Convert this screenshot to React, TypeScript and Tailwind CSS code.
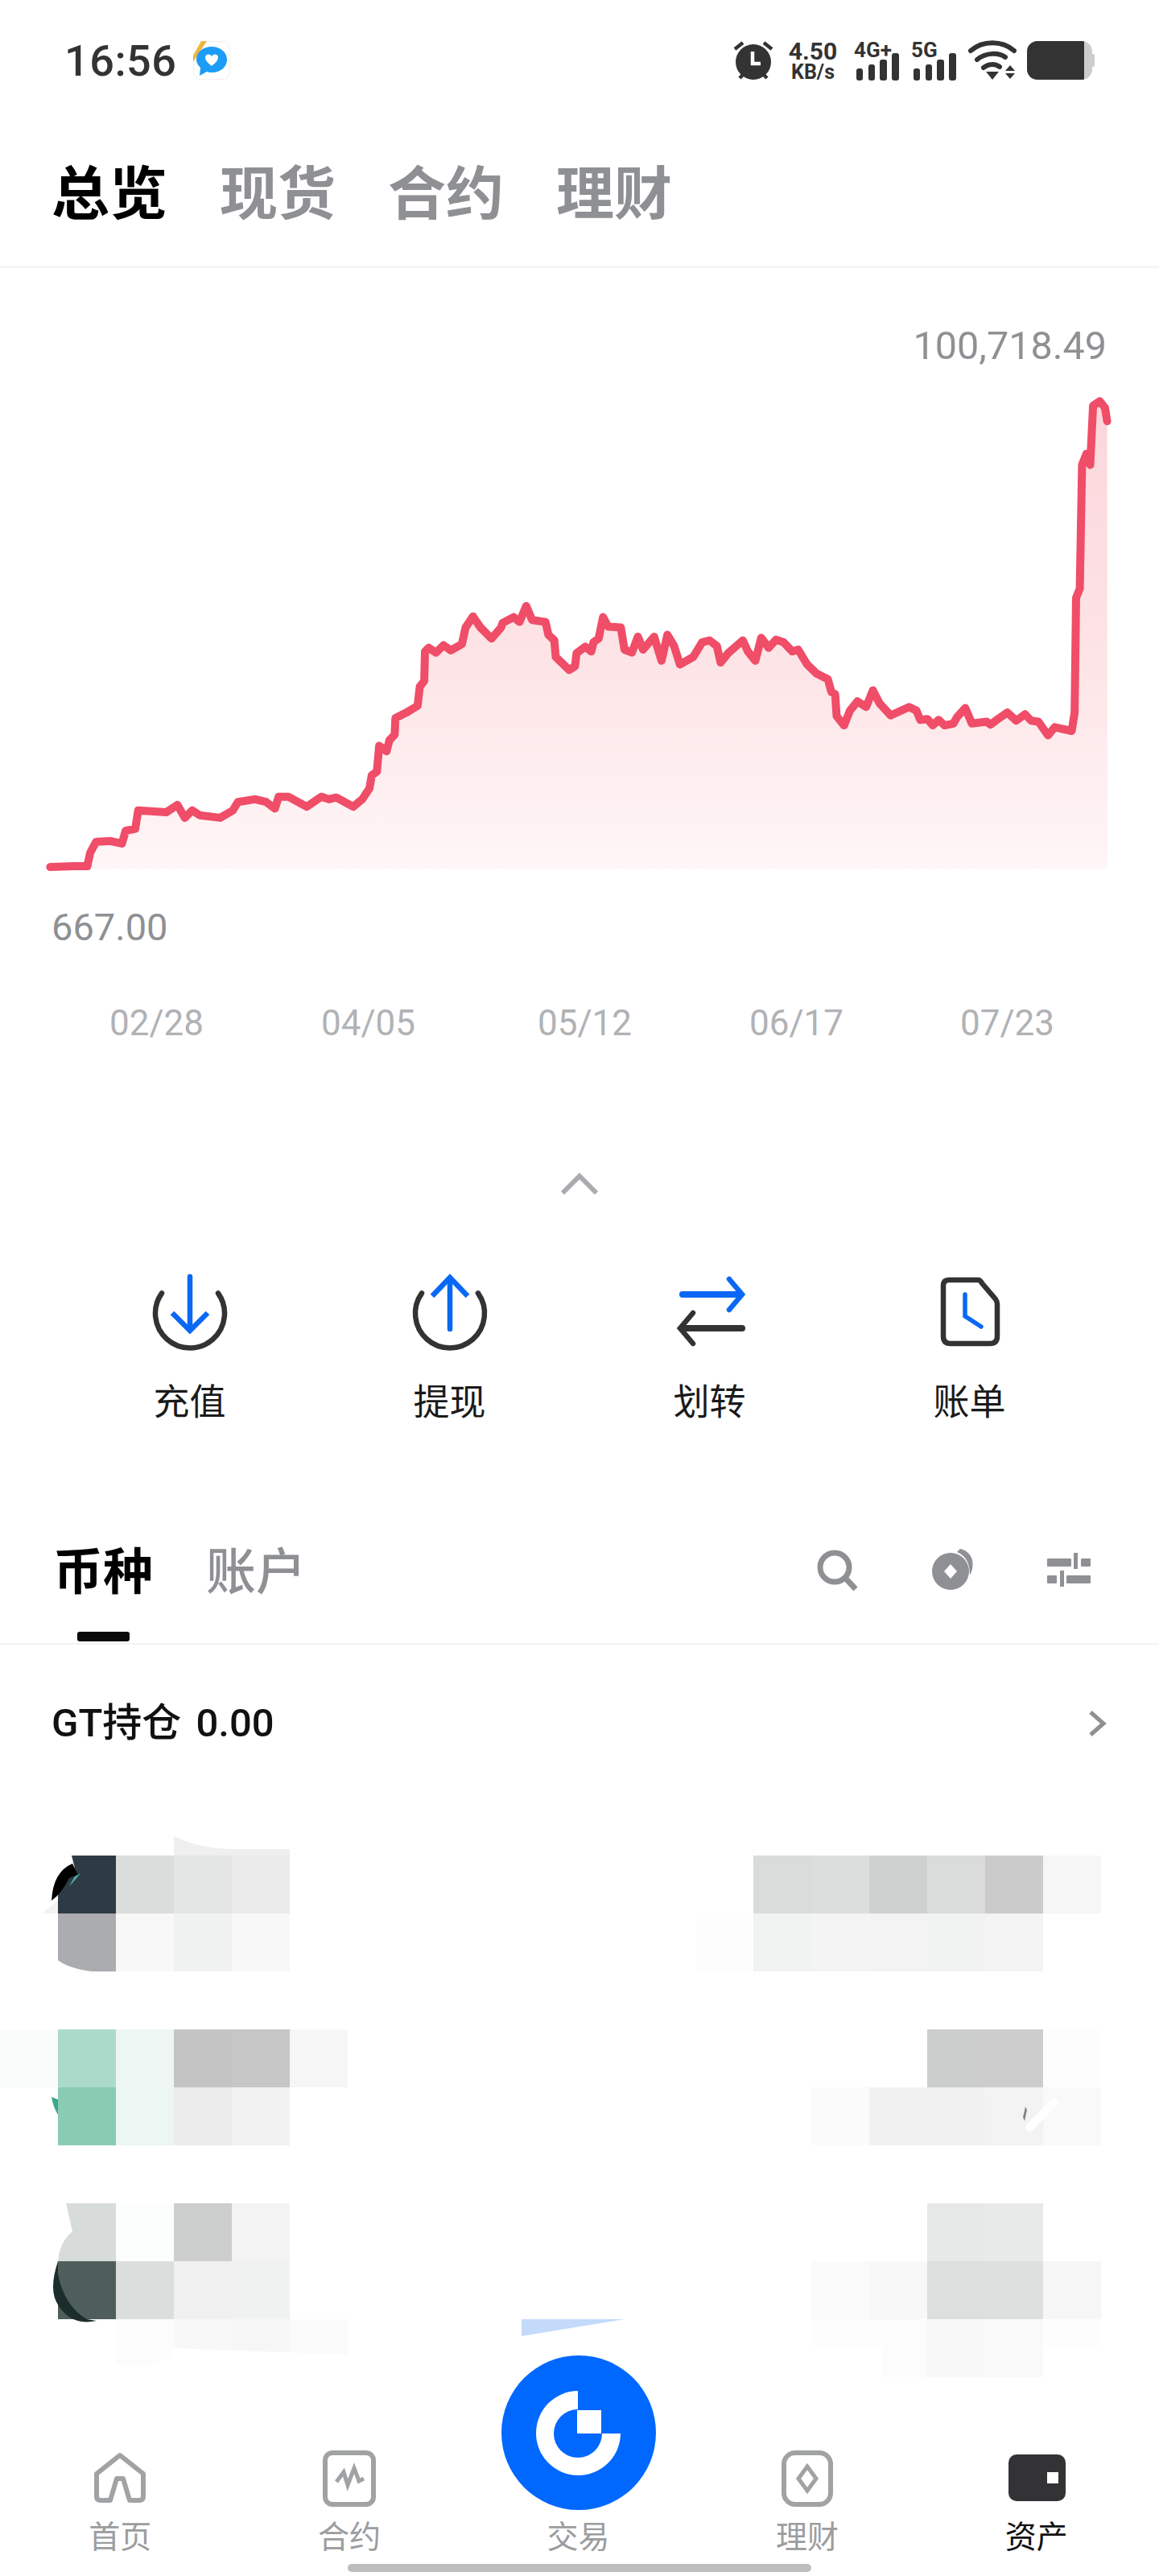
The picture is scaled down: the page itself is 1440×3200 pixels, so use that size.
const raw: [number, number][] = [[68,1518],[100,1516],[118,1516],[122,1480],[130,1450],[150,1448],[165,1455],[170,1420],[183,1415],[187,1365],[225,1370],[240,1350],[250,1385],[260,1365],[270,1378],[298,1385],[315,1365],[322,1342],[345,1335],[360,1342],[372,1360],[377,1328],[390,1328],[415,1355],[435,1328],[445,1335],[455,1330],[478,1355],[490,1335],[500,1305],[503,1270],[510,1260],[513,1190],[523,1205],[527,1175],[534,1160],[535,1115],[550,1100],[565,1082],[568,1030],[574,1015],[575,935],[580,925],[590,938],[600,918],[610,932],[625,915],[630,870],[640,840],[650,870],[665,900],[678,870],[680,858],[695,842],[703,855],[712,812],[720,850],[738,855],[742,890],[750,905],[752,950],[770,985],[778,975],[780,940],[792,922],[800,935],[803,910],[810,900],[816,842],[823,868],[840,870],[845,930],[855,938],[863,895],[870,930],[885,895],[895,960],[903,890],[912,920],[920,970],[938,950],[950,910],[960,905],[970,920],[975,965],[985,940],[1005,905],[1012,935],[1022,960],[1030,898],[1040,925],[1050,903],[1060,910],[1072,935],[1080,930],[1092,970],[1105,995],[1120,1010],[1125,1045],[1130,1050],[1132,1110],[1142,1135],[1150,1095],[1160,1070],[1172,1085],[1181,1040],[1190,1075],[1205,1108],[1230,1085],[1240,1095],[1245,1120],[1255,1118],[1262,1135],[1270,1120],[1278,1135],[1290,1130],[1295,1112],[1306,1088],[1315,1130],[1335,1125],[1340,1133],[1350,1118],[1363,1100],[1375,1122],[1387,1105],[1395,1122],[1405,1125],[1418,1162],[1427,1140],[1450,1150],[1454,1100],[1456,790],[1461,765],[1464,430],[1470,400],[1475,430],[1479,270],[1488,258],[1495,275],[1498,312]];

const pts = raw.map(([x, y]) => [x / 1.089, 380 + y / 2.178 - 460] as [number, number]);
const line = pts.map(([x, y]) => `${x.toFixed(1)},${y.toFixed(1)}`).join(" ");
const area = `M${line.split(" ").join(" L")} L1376,619 L64,619 Z`;

const mosaic: string[][] = [
  ["", "bg-[#2f3b44]", "bg-[#dbdcdc]", "bg-[#e4e5e5]", "bg-[#ebebeb]", "", "", "", "", "", "", "", "", "bg-[#dadbdb]", "bg-[#dcdddd]", "bg-[#cfd0d0]", "bg-[#dadbdb]", "bg-[#cbcbcb]", "bg-[#f6f6f6]", ""],
  ["", "bg-[#abacaf]", "bg-[#f8f8f8]", "bg-[#f0f1f1]", "bg-[#f8f8f8]", "", "", "", "", "", "", "", "bg-[#fdfdfd]", "bg-[#f1f2f2]", "bg-[#f4f4f4]", "bg-[#f3f3f3]", "bg-[#f1f2f2]", "bg-[#f4f4f4]", "", ""],
  [],
  ["bg-[#f9fcfb]", "bg-[#acdaca]", "bg-[#eef6f3]", "bg-[#c4c4c4]", "bg-[#c6c6c6]", "bg-[#f6f6f6]", "", "", "", "", "", "", "", "", "", "", "bg-[#cccdcd]", "bg-[#cdcdcd]", "bg-[#fdfdfd]", ""],
  ["", "bg-[#88ccb3]", "bg-[#ecf6f3]", "bg-[#ececec]", "bg-[#f2f2f2]", "", "", "", "", "", "", "", "", "", "bg-[#fbfbfb]", "bg-[#f1f1f1]", "bg-[#f0f1f0]", "bg-[#f3f3f3]", "bg-[#f8f9f8]", ""],
  [],
  ["", "bg-[#d7dbda]", "bg-[#fcfefd]", "bg-[#cdcfce]", "bg-[#f3f3f3]", "", "", "", "", "", "", "", "", "", "", "", "bg-[#e7e8e8]", "bg-[#e8e9e9]", "", ""],
  ["", "bg-[#4f5e5a]", "bg-[#dcdede]", "bg-[#f0f0f0]", "bg-[#f0f1f1]", "", "", "", "", "", "", "", "", "", "bg-[#fbfbfb]", "bg-[#f8f8f8]", "bg-[#dddede]", "bg-[#dedfdf]", "bg-[#f6f6f6]", ""],
  ["", "", "bg-[#fcfcfc]", "bg-[#f8f8f8]", "bg-[#f6f6f6]", "bg-[#fbfbfb]", "", "", "", "", "", "", "", "", "bg-[#fdfdfd]", "bg-[#fcfcfc]", "bg-[#f8f8f8]", "bg-[#f9f9f9]", "bg-[#fdfdfd]", ""],
];

function Signal({ label, width }: { label: string; width: string }) {
  return (
    <div className={`relative h-[50px] ${width}`}>
      <span className="absolute left-0 top-[-3px] text-[26px] leading-[30px] font-bold text-[#333]">{label}</span>
      <svg className="absolute left-[3px] top-[16px]" width="54" height="34" viewBox="0 0 54 34" fill="#333">
        <rect x="0" y="19" width="8" height="15" rx="3" />
        <rect x="15" y="14" width="8" height="20" rx="3" />
        <rect x="29" y="8" width="9" height="26" rx="3" />
        <rect x="44" y="0" width="9" height="34" rx="3" />
      </svg>
    </div>
  );
}

function StatusBar() {
  return (
    <div className="flex h-[150px] items-center justify-between pl-[80px] pr-[80px]">
      <div className="flex items-center">
        <span className="relative top-[1px] text-[54px] leading-[60px] font-medium tracking-[0.5px] text-[#333]">16:56</span>
        <svg className="ml-[20px]" width="46" height="48" viewBox="0 0 46 48">
          <rect x="0.5" y="0.5" width="45" height="47" rx="9" fill="#fff" stroke="#f0f0f0" />
          <path d="M0 18 L10 0 H17 L0 26 Z" fill="#eeb53f" />
          <path d="M23 7 C34 7 42 14 42 23 C42 32 34 39 24 39 C21 39 19 39 17 38 L8 43 L9 33 C6 30 4 27 4 23 C4 14 12 7 23 7 Z" fill="#1c9cf6" />
          <path d="M23 31 C18 27 15 24 15 20 C15 16 21 15 23 19 C25 15 31 16 31 20 C31 24 28 27 23 31 Z" fill="#fff" />
        </svg>
      </div>
      <div className="flex items-center">
        <svg width="50" height="50" viewBox="0 0 50 50">
          <circle cx="25" cy="27" r="22" fill="#333" />
          <path d="M24 14 V29 H34" fill="none" stroke="#fff" strokeWidth="4.5" />
          <path d="M2 11 L12 3 M48 11 L38 3 M8 47 L13 42 M42 47 L37 42" fill="none" stroke="#333" strokeWidth="4.5" />
        </svg>
        <div className="ml-[18px] flex w-[62px] flex-col items-center pt-[2px] text-[#333] font-bold">
          <span className="text-[30px] leading-[28px]">4.50</span>
          <span className="text-[25px] leading-[24px]">KB/s</span>
        </div>
        <div className="ml-[20px]"><Signal label="4G+" width="w-[71px]" /></div>
        <Signal label="5G" width="w-[71px]" />
        <svg width="60" height="50" viewBox="0 0 60 50" fill="none">
          <path d="M3 13 C18 0 42 0 57 13" stroke="#333" strokeWidth="6" strokeLinecap="round" />
          <path d="M11 24 C22 15 38 15 46 21" stroke="#333" strokeWidth="6" strokeLinecap="round" />
          <path d="M19 34 C25 29 33 29 39 33" stroke="#333" strokeWidth="6" strokeLinecap="round" />
          <path d="M22 39 H38 L30 49 Z" fill="#333" />
          <path d="M46 38 H58 L52 31 Z M46 41 H58 L52 48 Z" fill="#333" />
        </svg>
        <div className="ml-[13px] flex h-[48px] items-center">
          <div className="flex h-full w-[81px] overflow-hidden rounded-[13px] bg-[#cdcdcd]">
            <div className="h-full w-[71px] bg-[#333]" />
          </div>
          <div className="h-[16px] w-[3px] rounded-r-[2px] bg-[#cdcdcd]" />
        </div>
      </div>
    </div>
  );
}

function TopTabs() {
  const tabs = ["总览", "现货", "合约", "理财"];
  return (
    <div className="flex h-[183px] items-start gap-[65px] border-b-[3px] border-[#f5f5f5] pl-[64px] pt-[50px]">
      {tabs.map((t, i) => (
        <span key={t} className={`text-[72px] leading-[84px] font-bold ${i === 0 ? "text-black" : "text-[#8e9093]"}`}>{t}</span>
      ))}
    </div>
  );
}

function Chart() {
  return (
    <div>
      <div className="flex justify-end pr-[65px] pt-[67px]">
        <span className="text-[48.5px] leading-[60px] text-[#8e9093]">100,718.49</span>
      </div>
      <svg width="1440" height="630" viewBox="0 0 1440 630" className="block">
        <defs>
          <linearGradient id="chartFill" x1="0" y1="0" x2="0" y2="1">
            <stop offset="0" stopColor="#fbd6db" />
            <stop offset="0.55" stopColor="#fde4e6" />
            <stop offset="1" stopColor="#fff6f7" />
          </linearGradient>
        </defs>
        <path d={area} fill="url(#chartFill)" />
        <polyline points={line} fill="none" stroke="#ef4d68" strokeWidth="10" strokeLinejoin="round" strokeLinecap="round" />
      </svg>
      <div className="mt-[32px] pl-[64px] text-[47px] leading-[60px] text-[#8e9093]">667.00</div>
      <div className="mt-[64px] grid grid-cols-[263px_269px_263px_262px_116px] pl-[136px] text-[44px] leading-[50px] text-[#b0b2b5]">
        {["02/28", "04/05", "05/12", "06/17", "07/23"].map((d) => (
          <span key={d}>{d}</span>
        ))}
      </div>
      <div className="mt-[161px] flex justify-center">
        <svg width="50" height="28" viewBox="0 0 50 28" fill="none">
          <path d="M4 25 L25 4 L46 25" stroke="#a9abae" strokeWidth="6" />
        </svg>
      </div>
    </div>
  );
}

function Actions() {
  const blue = "#0a68f5";
  const dark = "#333";
  const ring = "M15 26.5 A43 43 0 1 0 85 26.5";
  const items = [
    {
      label: "充值",
      icon: (
        <>
          <path d={ring} stroke={dark} strokeWidth="6.5" strokeLinecap="round" />
          <path d="M50 6 V72" stroke={blue} strokeWidth="6.5" strokeLinecap="round" />
          <path d="M28 51 L50 73 L72 51" stroke={blue} strokeWidth="6.5" />
        </>
      ),
    },
    {
      label: "提现",
      icon: (
        <>
          <path d={ring} stroke={dark} strokeWidth="6.5" strokeLinecap="round" />
          <path d="M50 8 V71" stroke={blue} strokeWidth="6.5" strokeLinecap="round" />
          <path d="M28 30 L50 7 L72 30" stroke={blue} strokeWidth="6.5" />
        </>
      ),
    },
    {
      label: "划转",
      icon: (
        <>
          <path d="M16 28 H88" stroke={blue} strokeWidth="8" strokeLinecap="round" />
          <path d="M74 9 L90 28 L74 47" stroke={blue} strokeWidth="6.5" strokeLinecap="round" />
          <path d="M90 70 H15" stroke={dark} strokeWidth="8" strokeLinecap="round" />
          <path d="M29 51 L13 70 L29 89" stroke={dark} strokeWidth="6.5" strokeLinecap="round" />
        </>
      ),
    },
    {
      label: "账单",
      icon: (
        <>
          <path d="M24 10 H60 Q63 10 65 14 L82 34 Q84 37 84 40 V80 Q84 89 75 89 H26 Q17 89 17 80 V17 Q17 10 24 10 Z" stroke={dark} strokeWidth="6.5" />
          <path d="M44 28 V55 L64 68" stroke={blue} strokeWidth="5.5" strokeLinecap="round" />
        </>
      ),
    },
  ];
  return (
    <div className="mt-[95px] grid grid-cols-4 pl-[74px] pr-[74px]">
      {items.map((it) => (
        <div key={it.label} className="flex flex-col items-center">
          <svg width="100" height="100" viewBox="0 0 100 100" fill="none">{it.icon}</svg>
          <span className="mt-[33px] text-[45px] leading-[60px] text-[#1a1a1a]">{it.label}</span>
        </div>
      ))}
    </div>
  );
}

function AssetTabs() {
  return (
    <div className="relative mt-[146px] flex h-[124px] items-start justify-between border-b-2 border-[#f2f2f2] pl-[66px] pr-[85px]">
      <div className="flex gap-[66px]">
        <span className="text-[62px] leading-[70px] font-bold text-black">币种</span>
        <span className="text-[62px] leading-[70px] font-medium text-[#8e9093]">账户</span>
      </div>
      <div className="absolute left-[96px] top-[108px] h-[12px] w-[65px] rounded-[3px] bg-[#0a0a0a]" />
      <div className="flex items-center gap-[90px] pt-[4px]">
        <svg width="54" height="54" viewBox="0 0 54 54" fill="none">
          <circle cx="24" cy="24" r="18" stroke="#8e9093" strokeWidth="7" />
          <path d="M37 37 L50 51" stroke="#8e9093" strokeWidth="7" />
        </svg>
        <svg width="54" height="54" viewBox="0 0 54 54">
          <path d="M24 6 A23 23 0 1 0 24 52 A23 23 0 1 0 24 6 Z M24 20 L32 29 L24 38 L16 29 Z" fill="#8e9093" fillRule="evenodd" />
          <path d="M36 1 C50 4 56 18 48 34 C48 20 44 10 32 5 Z" fill="#8e9093" />
        </svg>
        <svg width="54" height="46" viewBox="0 0 54 46" fill="#8e9093">
          <rect x="0" y="9" width="30" height="10" rx="1" />
          <rect x="33" y="2" width="5" height="20" />
          <rect x="42" y="9" width="12" height="10" rx="1" />
          <rect x="0" y="30" width="12" height="10" rx="1" />
          <rect x="16" y="24" width="5" height="20" />
          <rect x="24" y="30" width="30" height="10" rx="1" />
        </svg>
      </div>
    </div>
  );
}

function GtRow() {
  return (
    <div className="mt-[68px] flex h-[60px] items-center justify-between pl-[64px] pr-[65px]">
      <span className="text-[49px] leading-[60px] font-medium text-[#111] [word-spacing:6px]">GT持仓 0.00</span>
      <svg width="24" height="34" viewBox="0 0 24 34" fill="none">
        <path d="M4 3 L20 17 L4 31" stroke="#8e9093" strokeWidth="5" />
      </svg>
    </div>
  );
}

function Mosaic() {
  return (
    <div className="relative mt-[134px] h-[648px] w-[1440px]">
      <div className="grid grid-cols-[repeat(20,72px)] auto-rows-[72px]">
        {mosaic.flatMap((row, r) =>
          Array.from({ length: 20 }, (_, c) => <div key={`${r}-${c}`} className={row[c] || ""} />)
        )}
      </div>
      <svg className="absolute left-0 top-0 overflow-visible" width="1440" height="648" viewBox="0 0 1440 648">
        <path d="M216 0 V-24 Q250 -8 290 -8 H360 V0 Z" fill="#efefef" />
        <path d="M72 0 H89 L94 20 L72 40 Z" fill="#fff" />
        <path d="M90 10 Q66 20 64 56 Q76 48 86 28 L97 24 Z" fill="#000" />
        <path d="M86 38 L93 26 L100 22 L90 34 Z" fill="#4fb6b0" />
        <path d="M72 56 L52 72 H72 Z" fill="#f3f3f3" />
        <path d="M72 130 Q85 140 114 144 H72 Z" fill="#fff" />
        <path d="M64 300 L72 303 V322 Q66 312 64 300 Z" fill="#3aa88a" />
        <path d="M1310 306 L1279 338" stroke="#fff" strokeWidth="10" strokeLinecap="round" />
        <path d="M1271 325 L1274 312 L1276 316 L1273 330 Z" fill="#80868b" />
        <path d="M72 432 H82 L90 467 Q74 480 72 504 Z" fill="#fff" />
        <path d="M72 504 Q60 540 72 558 Q88 585 120 578 L108 576 Q80 560 72 520 Z" fill="#1b2e2b" />
        <path d="M648 576 H776 L648 597 Z" fill="#c4dafa" />
        <path d="M216 612 L432 620 V649 H144 V632 Q205 640 216 612 Z" fill="#fff" />
        <rect x="1008" y="611" width="88" height="38" fill="#fff" />
        <rect x="1296" y="611" width="72" height="38" fill="#fff" />
      </svg>
    </div>
  );
}

function TabBar() {
  const gray = "#a0a2a4";
  const items = [
    {
      label: "首页",
      icon: <path d="M40 11 L69 34 V62 Q69 67 64 67 H52 L44 40 H36 L28 67 H16 Q11 67 11 62 V34 Z" stroke={gray} strokeWidth="6" strokeLinejoin="round" />,
    },
    {
      label: "合约",
      icon: (
        <>
          <rect x="10" y="8" width="60" height="64" rx="9" stroke={gray} strokeWidth="6" />
          <path d="M24 44 L33 32 L38 48 L46 27 L52 43 L58 40" stroke={gray} strokeWidth="5" />
        </>
      ),
    },
    { label: "交易", icon: null },
    {
      label: "理财",
      icon: (
        <>
          <rect x="11" y="8" width="58" height="64" rx="14" stroke={gray} strokeWidth="6" />
          <path d="M40 25 L51 40 L40 55 L29 40 Z" stroke={gray} strokeWidth="5" />
        </>
      ),
    },
    {
      label: "资产",
      icon: (
        <>
          <rect x="5" y="10" width="71" height="58" rx="10" fill="#333336" />
          <rect x="53" y="32" width="14" height="14" fill="#fff" />
        </>
      ),
    },
  ];
  return (
    <div className="relative flex-1 pt-[86px]">
      <div className="absolute left-[623px] top-[-27px] flex h-[192px] w-[192px] items-center justify-center rounded-full bg-[#0068ff]">
        <svg width="120" height="120" viewBox="0 0 120 120" fill="#fff">
          <path d="M59 8 A52.5 52.5 0 1 0 112 61 L89 61 A30 30 0 1 1 59 31 Z" />
          <rect x="58" y="32" width="30" height="29" />
        </svg>
      </div>
      <div className="grid grid-cols-5 pl-[7px] pr-[10px]">
        {items.map((it) => (
          <div key={it.label} className="flex flex-col items-center">
            <svg width="80" height="80" viewBox="0 0 80 80" fill="none">{it.icon}</svg>
            <span className={`mt-[8px] text-[39px] leading-[50px] ${it.label === "资产" ? "text-[#111]" : "text-[#9b9d9f]"}`}>{it.label}</span>
          </div>
        ))}
      </div>
      <div className="mx-auto mt-[8px] h-[10px] w-[576px] rounded-full bg-[#bdbdbd]" />
    </div>
  );
}

export default function App() {
  return (
    <div className="flex h-[3200px] w-[1440px] flex-col overflow-hidden bg-white font-['Roboto','Noto_Sans_CJK_SC',sans-serif]">
      <StatusBar />
      <TopTabs />
      <Chart />
      <Actions />
      <AssetTabs />
      <GtRow />
      <Mosaic />
      <TabBar />
    </div>
  );
}
